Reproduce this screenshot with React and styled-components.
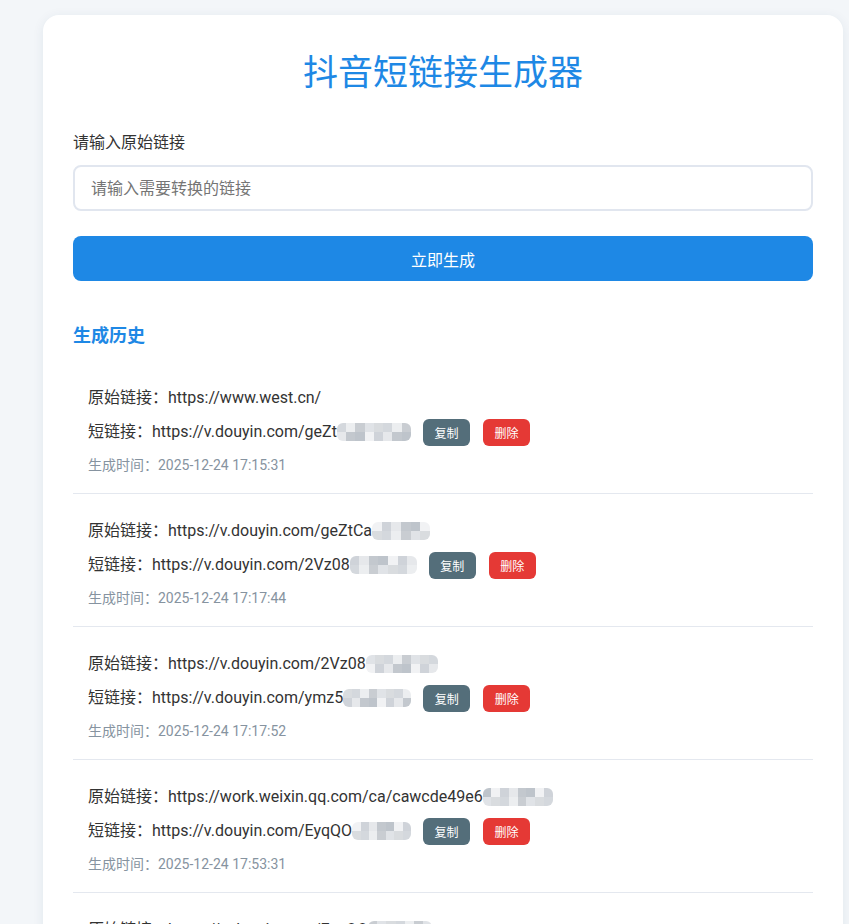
import styled, { createGlobalStyle } from 'styled-components';

const GlobalStyle = createGlobalStyle`
  html, body {
    margin: 0;
    padding: 0;
    background: #f3f6f9;
    font-family: Roboto, "Noto Sans CJK SC", sans-serif;
    color: #333;
  }
`;

const Page = styled.div`
  padding: 15px 0 0 43px;
  min-height: 924px;
  box-sizing: border-box;
`;

const Card = styled.div`
  width: 800px;
  box-sizing: border-box;
  background: #fff;
  border-radius: 16px;
  box-shadow: 0 2px 12px rgba(30, 60, 100, 0.08);
  padding: 30px 30px 20px;
`;

const Title = styled.h1`
  margin: 8px 0 37px;
  text-align: center;
  font-size: 35px;
  line-height: 42px;
  font-weight: 400;
  color: #1e88e5;
`;

const Label = styled.label`
  display: block;
  font-size: 16px;
  line-height: 22px;
  color: #333;
  margin-bottom: 11px;
`;

const Input = styled.input`
  display: block;
  width: 100%;
  box-sizing: border-box;
  height: 46px;
  padding: 0 16px;
  border: 2px solid #e1e6ef;
  border-radius: 8px;
  font-family: inherit;
  font-size: 16px;
  color: #333;
  outline: none;
  &::placeholder {
    color: #757575;
  }
`;

const Submit = styled.button`
  display: block;
  width: 100%;
  height: 45px;
  margin-top: 25px;
  border: none;
  border-radius: 8px;
  background: #1e88e5;
  color: #fff;
  font-family: inherit;
  font-size: 16px;
`;

const Heading = styled.h2`
  margin: 43px 0 13px;
  font-size: 18px;
  line-height: 24px;
  font-weight: 700;
  color: #1e88e5;
`;

const Item = styled.div`
  padding: 25px 15px 18px;
  border-bottom: 1px solid #e4e8ef;
`;

const Line = styled.div`
  display: flex;
  align-items: center;
  font-size: 16px;
  line-height: 24px;
  color: #333;
  white-space: nowrap;
`;

const LinkRow = styled(Line)`
  margin-top: 8px;
  height: 28px;
`;

const Time = styled.div`
  margin-top: 9px;
  font-size: 14px;
  line-height: 20px;
  color: #8693a0;
`;

const Mosaic = styled.span`
  display: inline-grid;
  width: ${p => p.$width}px;
  grid-auto-flow: column;
  grid-template-rows: 9px 9px;
  grid-auto-columns: 1fr;
  filter: blur(0.4px);
  border-radius: 6px;
  overflow: hidden;
`;

const Cell = styled.span`
  background: ${p => p.$shade};
`;

const Action = styled.button`
  margin-left: ${p => p.$first ? '12px' : '13px'};
  width: 47px;
  height: 27px;
  border: none;
  border-radius: 6px;
  background: ${p => p.$danger ? '#e53935' : '#546e7a'};
  color: #fff;
  font-family: inherit;
  font-size: 12px;
  padding: 0;
`;

const shades = ['#d4d8dd', '#c3c8ce', '#e0e3e7', '#cfd3d9', '#eceef0', '#bec4cb', '#d9dcdf', '#e6e8eb', '#c9cdd2', '#f1f2f4'];

function Masked({ width, seed }) {
  const cols = Math.round(width / 9);
  const cells = [];
  for (let i = 0; i < cols * 2; i++) {
    cells.push(<Cell key={i} $shade={shades[(i * 7 + seed * 3) % shades.length]} />);
  }
  return <Mosaic $width={width}>{cells}</Mosaic>;
}

const history = [
  { original: 'https://www.west.cn/', short: 'https://v.douyin.com/geZt', shortMask: 74, time: '2025-12-24 17:15:31' },
  { original: 'https://v.douyin.com/geZtCa', origMask: 58, short: 'https://v.douyin.com/2Vz08', shortMask: 67, time: '2025-12-24 17:17:44' },
  { original: 'https://v.douyin.com/2Vz08', origMask: 72, short: 'https://v.douyin.com/ymz5', shortMask: 68, time: '2025-12-24 17:17:52' },
  { original: 'https://work.weixin.qq.com/ca/cawcde49e6', origMask: 70, short: 'https://v.douyin.com/EyqQO', shortMask: 59, time: '2025-12-24 17:53:31' },
  { original: 'https://v.douyin.com/EyqQO', origMask: 64, short: 'https://v.douyin.com/Lk2a', shortMask: 66, time: '2025-12-24 18:02:10' },
];

function App() {
  return (
    <Page>
      <GlobalStyle />
      <Card>
        <Title>抖音短链接生成器</Title>
        <Label>请输入原始链接</Label>
        <Input placeholder="请输入需要转换的链接" />
        <Submit>立即生成</Submit>

        <Heading>生成历史</Heading>
        {history.map((entry, i) => (
          <Item key={i}>
            <Line>
              原始链接：{entry.original}
              {entry.origMask && <Masked width={entry.origMask} seed={i + 2} />}
            </Line>
            <LinkRow>
              短链接：{entry.short}
              <Masked width={entry.shortMask} seed={i} />
              <Action $first>复制</Action>
              <Action $danger>删除</Action>
            </LinkRow>
            <Time>生成时间：{entry.time}</Time>
          </Item>
        ))}
      </Card>
    </Page>
  );
}

export default App;
